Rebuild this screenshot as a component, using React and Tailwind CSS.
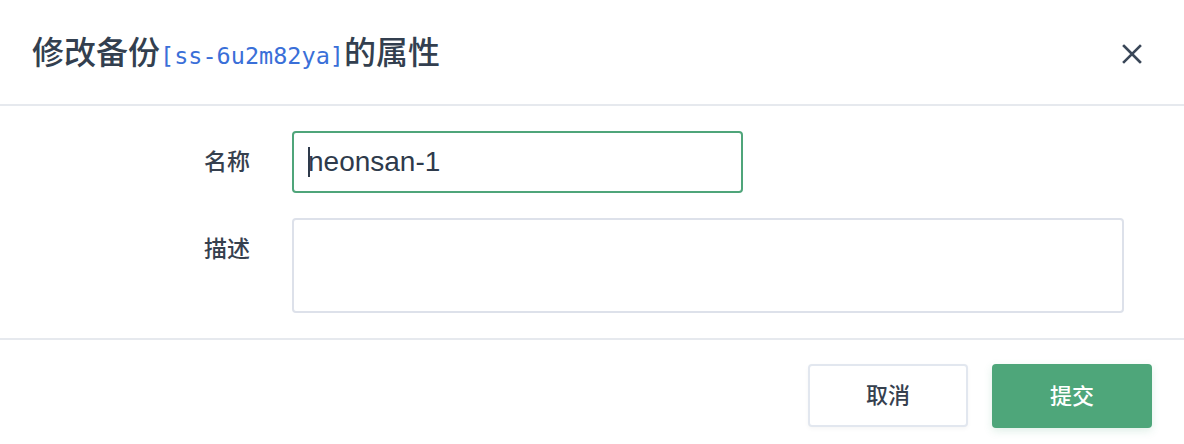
export default function App() {
  const cjk = { fontFamily: '"Liberation Sans", "Noto Sans CJK SC", sans-serif' };

  return (
    <div className="w-[1184px] h-[444px] bg-white flex flex-col text-[#333f4f]" style={cjk}>
      {/* header */}
      <div className="h-[106px] flex items-center justify-between pl-[32px] pr-[40px] border-b-2 border-[#e6e9ee] shrink-0">
        <h1 className="text-[32px] font-medium leading-none flex items-baseline mt-[2px]">
          <span>修改备份</span>
          <span className="text-[23.5px] font-normal text-[#3a6fd8]" style={{ fontFamily: '"DejaVu Sans Mono", "Liberation Mono", monospace' }}>
            [ss-6u2m82ya]
          </span>
          <span>的属性</span>
        </h1>
        <button className="w-[24px] h-[24px] flex items-center justify-center mt-[4px]">
          <svg viewBox="0 0 20 20" className="w-[20px] h-[20px]" fill="none" stroke="#3a4758" strokeWidth={2.6} strokeLinecap="square">
            <path d="M2 2l16 16M18 2L2 18" />
          </svg>
        </button>
      </div>

      {/* form */}
      <div className="flex flex-col gap-[25px] pt-[25px] pb-[25px] border-b-2 border-[#e6e9ee]">
        <div className="flex items-start">
          <label className="w-[250px] mr-[42px] text-right text-[23px] leading-[62px] font-medium text-[#36404e]">名称</label>
          <div className="w-[451px] h-[62px] border-2 border-[#4fa57a] rounded-[4px] flex items-center pl-[14px]">
            <span className="w-[2px] h-[30px] bg-[#2e3a4b] mr-[-2px]" />
            <span className="text-[28px] text-[#2e3a4b]" style={{ fontFamily: '"Liberation Sans", sans-serif' }}>neonsan-1</span>
          </div>
        </div>
        <div className="flex items-start">
          <label className="w-[250px] mr-[42px] text-right text-[23px] leading-[62px] font-medium text-[#36404e]">描述</label>
          <div className="w-[832px] h-[95px] border-2 border-[#dde1ea] rounded-[4px]" />
        </div>
      </div>

      {/* footer */}
      <div className="flex-1 flex items-start justify-end gap-[24px] pt-[24px] pr-[32px]">
        <button className="w-[160px] h-[63px] border-2 border-[#e2e7ef] rounded-[4px] bg-white text-[22px] font-medium text-[#36404e] shadow-[0_2px_4px_rgba(0,0,0,0.04)]">
          取消
        </button>
        <button className="w-[160px] h-[64px] rounded-[4px] bg-[#4ea67a] text-[22px] font-medium text-white shadow-[0_3px_8px_rgba(78,166,122,0.18)]">
          提交
        </button>
      </div>
    </div>
  );
}
